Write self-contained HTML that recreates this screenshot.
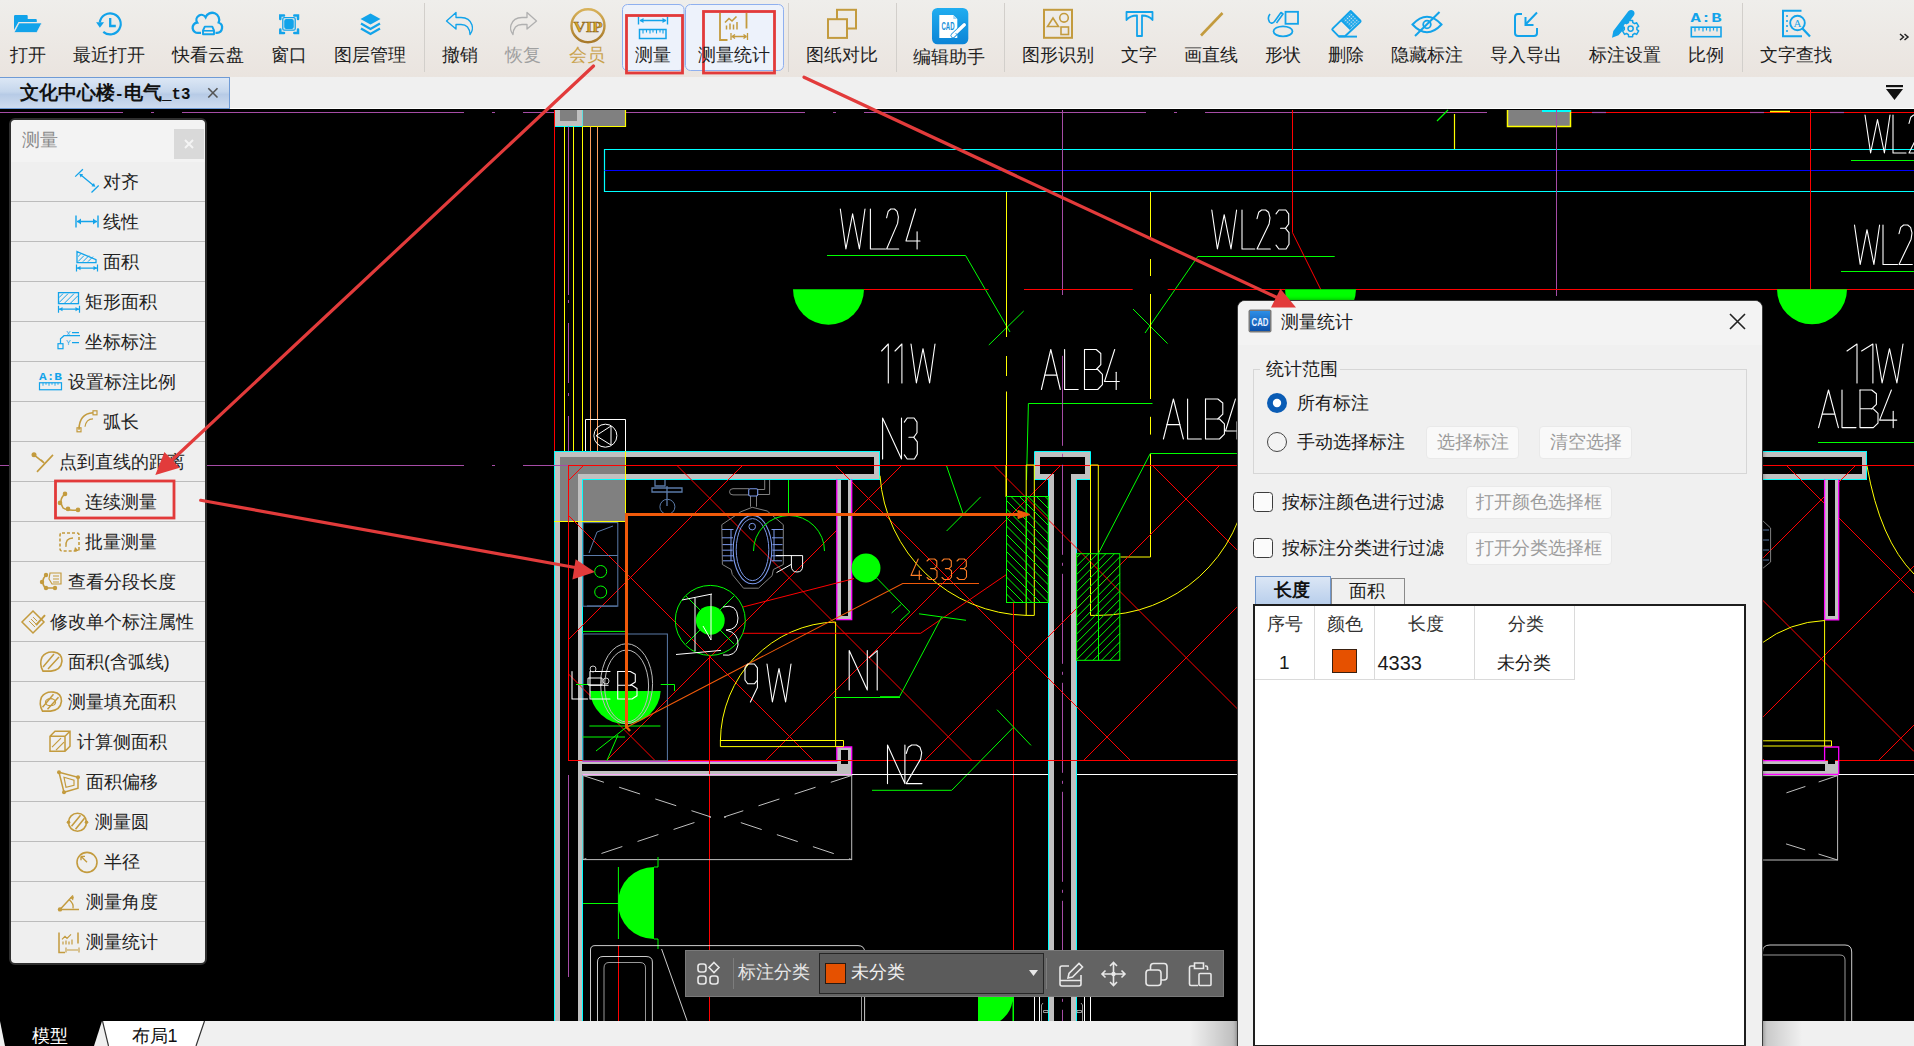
<!DOCTYPE html>
<html><head><meta charset="utf-8">
<style>
*{margin:0;padding:0;box-sizing:border-box}
html,body{width:1914px;height:1046px;overflow:hidden}
body{position:relative;background:#000;font-family:"Liberation Sans",sans-serif;color:#222}
.a{position:absolute}
.lb{position:absolute;font-size:17.5px;line-height:22px;white-space:nowrap;transform:translateX(-50%)}
.t{position:absolute;font-size:17.8px;line-height:22px;white-space:nowrap;color:#1a1a1a}
.btn{position:absolute;background:#f9f9f9;border:1px solid #e9e9e9;border-radius:4px;color:#9c9c9c;font-size:17.5px;line-height:31px;text-align:center;white-space:nowrap}
</style></head><body>

<svg class="a" style="left:0;top:0" width="1914" height="1046" viewBox="0 0 1914 1046"><defs><clipPath id="cadclip"><rect x="0" y="109" width="1914" height="912"/></clipPath><clipPath id="latclip"><rect x="568.3" y="465.1" width="1346" height="295.7"/></clipPath></defs><rect x="0" y="109" width="1914" height="912" fill="#000"/><g clip-path="url(#cadclip)" shape-rendering="auto"><line x1="0" y1="112.5" x2="123" y2="112.5" stroke="#a64ca6" stroke-width="1" /><line x1="151" y1="112.5" x2="154" y2="112.5" stroke="#a64ca6" stroke-width="1" /><line x1="182" y1="112.5" x2="464" y2="112.5" stroke="#a64ca6" stroke-width="1" /><line x1="492" y1="112.5" x2="495" y2="112.5" stroke="#a64ca6" stroke-width="1" /><line x1="523" y1="112.5" x2="805" y2="112.5" stroke="#a64ca6" stroke-width="1" /><line x1="833" y1="112.5" x2="836" y2="112.5" stroke="#a64ca6" stroke-width="1" /><line x1="864" y1="112.5" x2="1146" y2="112.5" stroke="#a64ca6" stroke-width="1" /><line x1="1174" y1="112.5" x2="1177" y2="112.5" stroke="#a64ca6" stroke-width="1" /><line x1="1205" y1="112.5" x2="1487" y2="112.5" stroke="#a64ca6" stroke-width="1" /><line x1="1571" y1="112.5" x2="1914" y2="112.5" stroke="#ff0000" stroke-width="1" /><line x1="1592" y1="112.5" x2="1606" y2="112.5" stroke="#a64ca6" stroke-width="1.2" /><line x1="1750" y1="112.5" x2="1764" y2="112.5" stroke="#a64ca6" stroke-width="1.2" /><line x1="1830" y1="112.5" x2="1844" y2="112.5" stroke="#a64ca6" stroke-width="1.2" /><line x1="1770" y1="111.5" x2="1790" y2="111.5" stroke="#ffff00" stroke-width="1.5" /><rect x="554" y="110" width="29" height="16" fill="#c0c0c0"/><rect x="560" y="110" width="17" height="11" fill="#808080"/><path d="M554.5 110 V126.5 H583 V110" stroke="#00ffff" stroke-width="1" fill="none" /><rect x="583" y="110" width="43" height="16" fill="#808080"/><path d="M583 126.5 H625.5 V110" stroke="#ffff00" stroke-width="1.2" fill="none" /><rect x="1507" y="110" width="64" height="17" fill="#808080"/><path d="M1507.5 110 V126.5 H1570.5 V110" stroke="#ffff00" stroke-width="1.5" fill="none" /><line x1="1542" y1="111" x2="1571" y2="111" stroke="#00ffff" stroke-width="2" /><line x1="554.5" y1="110" x2="554.5" y2="1021" stroke="#ff0000" stroke-width="1" /><line x1="564.5" y1="126.5" x2="564.5" y2="451" stroke="#ffff00" stroke-width="1" /><line x1="573.5" y1="126.5" x2="573.5" y2="451" stroke="#ffff00" stroke-width="1" /><line x1="582.5" y1="126.5" x2="582.5" y2="451" stroke="#ffff00" stroke-width="1" /><line x1="568.5" y1="126.5" x2="568.5" y2="295" stroke="#a64ca6" stroke-width="1" /><line x1="568.5" y1="300" x2="568.5" y2="451" stroke="#a64ca6" stroke-width="1" stroke-dasharray="3 20 60 10"/><line x1="590.5" y1="126.5" x2="590.5" y2="451" stroke="#ff9f5f" stroke-width="1" /><line x1="597.5" y1="126.5" x2="597.5" y2="451" stroke="#ff9f5f" stroke-width="1" /><path d="M1914 149.5 H604.5 V191.5 H1914" stroke="#00ffff" stroke-width="1.2" fill="none" /><line x1="604.5" y1="170.5" x2="1914" y2="170.5" stroke="#0000ff" stroke-width="1" /><g fill="none" stroke="#fff" stroke-width="1.1" stroke-linejoin="round" stroke-linecap="round"><polyline points="840.3,209.0 845.9,249.0 852.6,213.8 859.4,249.0 865.0,209.0"/><polyline points="870.4,209.0 870.4,249.0 885.5,249.0"/><polyline points="886.6,217.8 888.2,211.4 890.8,209.0 894.5,209.0 897.1,211.4 898.4,217.0 897.6,223.4 886.6,249.0 898.7,249.0"/><polyline points="915.6,209.0 906.0,241.0 920.0,241.0"/><polyline points="917.1,231.8 917.1,249.0"/></g><g fill="none" stroke="#fff" stroke-width="1.1" stroke-linejoin="round" stroke-linecap="round"><polyline points="1211.8,210.0 1217.4,249.0 1224.2,214.7 1231.0,249.0 1236.6,210.0"/><polyline points="1242.0,210.0 1242.0,249.0 1254.8,249.0"/><polyline points="1257.0,218.6 1258.7,212.3 1261.6,210.0 1265.7,210.0 1268.6,212.3 1270.0,217.8 1269.1,224.0 1257.0,249.0 1270.3,249.0"/><polyline points="1276.0,213.9 1278.9,210.0 1285.8,210.0 1288.7,213.9 1288.7,224.0 1285.5,228.3 1280.6,228.3"/><polyline points="1285.5,228.3 1289.0,232.6 1289.0,244.3 1286.1,249.0 1278.9,249.0 1276.0,245.1"/></g><g fill="none" stroke="#fff" stroke-width="1.1" stroke-linejoin="round" stroke-linecap="round"><polyline points="1865.0,115.0 1870.6,153.0 1877.5,119.6 1884.4,153.0 1890.0,115.0"/><polyline points="1893.0,115.0 1893.0,153.0 1906.0,153.0"/><polyline points="1909.0,123.4 1910.7,117.3 1913.6,115.0 1917.7,115.0 1920.6,117.3 1922.0,122.6 1921.1,128.7 1909.0,153.0 1922.3,153.0"/></g><g fill="none" stroke="#fff" stroke-width="1.1" stroke-linejoin="round" stroke-linecap="round"><polyline points="1854.5,225.0 1860.2,264.5 1867.0,229.7 1873.9,264.5 1879.6,225.0"/><polyline points="1883.0,225.0 1883.0,264.5 1897.5,264.5"/><polyline points="1899.0,233.7 1900.7,227.4 1903.6,225.0 1907.7,225.0 1910.6,227.4 1912.0,232.9 1911.1,239.2 1899.0,264.5 1912.3,264.5"/></g><path d="M827 255.5 H965.6 L1010 332" stroke="#00ff00" stroke-width="1" fill="none" /><line x1="1023.7" y1="311" x2="988.8" y2="345" stroke="#00ff00" stroke-width="1" /><path d="M1334.7 256.5 H1197.8 L1145 333" stroke="#00ff00" stroke-width="1" fill="none" /><line x1="1133" y1="309" x2="1167.6" y2="343.6" stroke="#00ff00" stroke-width="1" /><line x1="1851" y1="160.5" x2="1914" y2="160.5" stroke="#00ff00" stroke-width="1" /><line x1="1841" y1="271.5" x2="1914" y2="271.5" stroke="#00ff00" stroke-width="1" /><line x1="1437" y1="121" x2="1448" y2="110" stroke="#00ff00" stroke-width="1.2" /><line x1="1454.5" y1="114" x2="1454.5" y2="149" stroke="#ffff00" stroke-width="1.2" /><line x1="1062.5" y1="110" x2="1062.5" y2="295" stroke="#a64ca6" stroke-width="1" /><line x1="1556.5" y1="110" x2="1556.5" y2="296" stroke="#a64ca6" stroke-width="1" /><line x1="1810.5" y1="110" x2="1810.5" y2="289.6" stroke="#ff0000" stroke-width="1" /><path d="M1292.5 110 V232.7 L1320.8 289.6" stroke="#ff0000" stroke-width="1" fill="none" /><path d="M1006.5 192 V337 M1006.5 356 V376 M1006.5 391.5 V497" stroke="#ffff00" stroke-width="1" fill="none" /><path d="M1150.5 192 V237 M1150.5 259 V276 M1150.5 294 V399 M1150.5 416.8 V434.6 M1150.5 453.6 V557 H1120.4" stroke="#ffff00" stroke-width="1" fill="none" /><path d="M864 289.5 H988.6 M1024 289.5 H1132.7 M1167.7 289.5 H1285 M1355.6 289.5 H1914" stroke="#ff0000" stroke-width="1" fill="none" /><path d="M793.0 289.3 A35.5 35.5 0 0 0 864.0 289.3 Z" fill="#00ff00"/><path d="M1285.0 289.3 A35.5 35.5 0 0 0 1356.0 289.3 Z" fill="#00ff00"/><path d="M1777 289.3 A35 35 0 0 0 1847 289.3 Z" fill="#00ff00"/><g fill="none" stroke="#fff" stroke-width="1.1" stroke-linejoin="round" stroke-linecap="round"><polyline points="881.6,351.0 888.3,344.0 888.3,383.0"/><polyline points="895.0,351.0 901.9,344.0 901.9,383.0"/><polyline points="911.0,344.0 916.4,383.0 923.0,348.7 929.6,383.0 935.0,344.0"/></g><g fill="none" stroke="#fff" stroke-width="1.1" stroke-linejoin="round" stroke-linecap="round"><polyline points="882.6,459.0 882.6,418.0 901.5,459.0 901.5,418.0"/><polyline points="904.3,422.1 907.2,418.0 914.1,418.0 917.0,422.1 917.0,432.8 913.8,437.3 908.9,437.3"/><polyline points="913.8,437.3 917.3,441.8 917.3,454.1 914.4,459.0 907.2,459.0 904.3,454.9"/></g><g fill="none" stroke="#fff" stroke-width="1.1" stroke-linejoin="round" stroke-linecap="round"><polyline points="1041.4,389.5 1050.8,349.5 1060.3,389.5"/><polyline points="1044.8,375.1 1056.9,375.1"/><polyline points="1064.6,349.5 1064.6,389.5 1078.2,389.5"/><polyline points="1084.5,349.5 1084.5,389.5 1097.7,389.5 1102.4,384.7 1102.4,374.3 1097.7,369.5 1084.5,369.5"/><polyline points="1084.5,349.5 1096.2,349.5 1100.8,353.5 1100.8,364.7 1096.2,369.5"/><polyline points="1114.7,349.5 1104.5,381.5 1119.3,381.5"/><polyline points="1116.2,372.3 1116.2,389.5"/></g><g fill="none" stroke="#fff" stroke-width="1.1" stroke-linejoin="round" stroke-linecap="round"><polyline points="1163.4,439.0 1173.4,399.0 1183.4,439.0"/><polyline points="1167.0,424.6 1179.8,424.6"/><polyline points="1187.6,399.0 1187.6,439.0 1201.3,439.0"/><polyline points="1205.5,399.0 1205.5,439.0 1219.5,439.0 1224.4,434.2 1224.4,423.8 1219.5,419.0 1205.5,419.0"/><polyline points="1205.5,399.0 1217.8,399.0 1222.8,403.0 1222.8,414.2 1217.8,419.0"/><polyline points="1235.5,399.0 1225.5,431.0 1240.0,431.0"/><polyline points="1237.0,421.8 1237.0,439.0"/></g><g fill="none" stroke="#fff" stroke-width="1.1" stroke-linejoin="round" stroke-linecap="round"><polyline points="1847.0,351.0 1857.0,344.0 1857.0,383.0"/><polyline points="1861.6,351.0 1872.9,344.0 1872.9,383.0"/><polyline points="1876.0,344.0 1882.1,383.0 1889.5,348.7 1896.9,383.0 1903.0,344.0"/></g><g fill="none" stroke="#fff" stroke-width="1.1" stroke-linejoin="round" stroke-linecap="round"><polyline points="1818.6,427.6 1828.5,390.0 1838.4,427.6"/><polyline points="1822.2,414.1 1834.8,414.1"/><polyline points="1842.0,390.0 1842.0,427.6 1856.0,427.6"/><polyline points="1860.0,390.0 1860.0,427.6 1873.3,427.6 1878.0,423.1 1878.0,413.3 1873.3,408.8 1860.0,408.8"/><polyline points="1860.0,390.0 1871.7,390.0 1876.4,393.8 1876.4,404.3 1871.7,408.8"/><polyline points="1891.4,390.0 1879.6,420.1 1896.8,420.1"/><polyline points="1893.2,411.4 1893.2,427.6"/></g><line x1="1818" y1="442.5" x2="1914" y2="442.5" stroke="#00ff00" stroke-width="1" /><path d="M1152.5 403.5 H1028.4 L1026.5 480" stroke="#00ff00" stroke-width="1" fill="none" /><path d="M585.5 451 V419.5 H625.5 V451" stroke="#ffffff" stroke-width="1" fill="none" /><circle cx="605.4" cy="435.7" r="11.5" fill="none" stroke="#ffffff"/><path d="M596 435.7 L611 426 V445 Z" stroke="#ffffff" stroke-width="1" fill="none" /><rect x="560" y="457" width="65" height="64" fill="#808080"/><rect x="554" y="451" width="326" height="6" fill="#c0c0c0"/><rect x="578" y="474" width="302" height="6" fill="#c0c0c0"/><rect x="874" y="451" width="6" height="29" fill="#c0c0c0"/><rect x="554" y="451" width="6" height="570" fill="#c0c0c0"/><rect x="578" y="474" width="4" height="547" fill="#c0c0c0"/><path d="M554.5 1021 V451.5 H879.5 V479.5 H582.5 V1021" stroke="#00ffff" stroke-width="1" fill="none" /><path d="M554.2 521.5 H625.5 V451.3" stroke="#ffff00" stroke-width="1" fill="none" /><rect x="1034" y="452" width="57" height="28" fill="#c0c0c0"/><rect x="1040" y="457" width="45" height="17" fill="#000"/><rect x="1048" y="474" width="29" height="547" fill="#c0c0c0"/><rect x="1054" y="480" width="11" height="541" fill="#000"/><rect x="1065" y="474" width="6" height="547" fill="#000"/><rect x="1054" y="474" width="17" height="6" fill="#000"/><path d="M1048.5 1021 V479.5 H1034.5 V451.5 H1090.5 V479.5 H1076.5 V1021" stroke="#00ffff" stroke-width="1" fill="none" /><rect x="1762" y="451" width="105" height="29" fill="#c0c0c0"/><rect x="1762" y="457" width="100" height="17" fill="#000"/><path d="M1762 451.5 H1866.5 V479.5 H1762" stroke="#00ffff" stroke-width="1" fill="none" /><line x1="0" y1="465.5" x2="123" y2="465.5" stroke="#a64ca6" stroke-width="1" /><line x1="151" y1="465.5" x2="154" y2="465.5" stroke="#a64ca6" stroke-width="1" /><line x1="182" y1="465.5" x2="464" y2="465.5" stroke="#a64ca6" stroke-width="1" /><line x1="492" y1="465.5" x2="495" y2="465.5" stroke="#a64ca6" stroke-width="1" /><line x1="523" y1="465.5" x2="568" y2="465.5" stroke="#a64ca6" stroke-width="1" /><line x1="568.3" y1="465.5" x2="1914" y2="465.5" stroke="#ff0000" stroke-width="1" /><line x1="568.5" y1="465" x2="568.5" y2="761" stroke="#ff0000" stroke-width="1" /><line x1="568.5" y1="775" x2="568.5" y2="977" stroke="#a64ca6" stroke-width="1" /><line x1="1062.5" y1="355.8" x2="1062.5" y2="1021" stroke="#a64ca6" stroke-width="1" stroke-dasharray="90 8 3 8"/><g clip-path="url(#latclip)"><line x1="1786.1" y1="465.1" x2="1914" y2="593.0" stroke="#ff0000" stroke-width="1" /><line x1="1627.6" y1="465.1" x2="1914" y2="751.5" stroke="#ff0000" stroke-width="1" /><line x1="1469.1" y1="465.1" x2="1764.8" y2="760.8" stroke="#ff0000" stroke-width="1" /><line x1="1310.6" y1="465.1" x2="1606.3" y2="760.8" stroke="#ff0000" stroke-width="1" /><line x1="1152.1" y1="465.1" x2="1447.8" y2="760.8" stroke="#ff0000" stroke-width="1" /><line x1="993.6" y1="465.1" x2="1289.3" y2="760.8" stroke="#ff0000" stroke-width="1" /><line x1="835.1" y1="465.1" x2="1130.8" y2="760.8" stroke="#ff0000" stroke-width="1" /><line x1="676.6" y1="465.1" x2="972.3" y2="760.8" stroke="#ff0000" stroke-width="1" /><line x1="568.3" y1="515.3" x2="813.8" y2="760.8" stroke="#ff0000" stroke-width="1" /><line x1="568.3" y1="673.8" x2="655.3" y2="760.8" stroke="#ff0000" stroke-width="1" /><line x1="568.3" y1="480.7" x2="583.9" y2="465.1" stroke="#ff0000" stroke-width="1" /><line x1="568.3" y1="639.7" x2="742.9" y2="465.1" stroke="#ff0000" stroke-width="1" /><line x1="606.2" y1="760.8" x2="901.9" y2="465.1" stroke="#ff0000" stroke-width="1" /><line x1="765.2" y1="760.8" x2="1060.9" y2="465.1" stroke="#ff0000" stroke-width="1" /><line x1="924.2" y1="760.8" x2="1219.9" y2="465.1" stroke="#ff0000" stroke-width="1" /><line x1="1083.2" y1="760.8" x2="1378.9" y2="465.1" stroke="#ff0000" stroke-width="1" /><line x1="1242.2" y1="760.8" x2="1537.9" y2="465.1" stroke="#ff0000" stroke-width="1" /><line x1="1401.2" y1="760.8" x2="1696.9" y2="465.1" stroke="#ff0000" stroke-width="1" /><line x1="1560.2" y1="760.8" x2="1855.9" y2="465.1" stroke="#ff0000" stroke-width="1" /><line x1="1719.2" y1="760.8" x2="1914" y2="566" stroke="#ff0000" stroke-width="1" /><line x1="1878.2" y1="760.8" x2="1914" y2="725" stroke="#ff0000" stroke-width="1" /></g><rect x="837" y="480" width="15" height="140" fill="#c0c0c0"/><rect x="841" y="480" width="7" height="136" fill="#000"/><path d="M836.8 479.6 V619.7 H851.7 V479.6" stroke="#ff00ff" stroke-width="1.3" fill="none" /><rect x="582" y="761" width="270" height="14" fill="#c0c0c0"/><rect x="582" y="764" width="255" height="7" fill="#000"/><rect x="837" y="747" width="15" height="28" fill="#c0c0c0"/><rect x="841" y="750" width="7" height="14" fill="#000"/><path d="M582.5 761 H836.8 V747 H851.7 V775 H582.5" stroke="#ff00ff" stroke-width="1.3" fill="none" /><line x1="1762" y1="760.5" x2="1914" y2="760.5" stroke="#ff0000" stroke-width="1" /><line x1="568.3" y1="760.5" x2="1914" y2="760.5" stroke="#ff0000" stroke-width="1" /><rect x="1825" y="480" width="14" height="140" fill="#c0c0c0"/><rect x="1828" y="480" width="7" height="136" fill="#000"/><path d="M1824.6 479.5 V619.8 H1838.7 V479.5" stroke="#ff00ff" stroke-width="1.3" fill="none" /><rect x="1762" y="761" width="77" height="13" fill="#c0c0c0"/><rect x="1762" y="764" width="63" height="7" fill="#000"/><rect x="1828" y="750" width="7" height="14" fill="#000"/><path d="M1762 760.7 H1824.6 V747 H1838.7 V774.5 H1762" stroke="#ff00ff" stroke-width="1.3" fill="none" /><line x1="1838.7" y1="774.5" x2="1914" y2="774.5" stroke="#ffffff" stroke-width="1" /><path d="M1824.6 619.8 V746 M1762 740.8 H1831.5 V746 H1762" stroke="#ffff00" stroke-width="1" fill="none" /><path d="M1762 643 Q1790 622 1824.6 620.5" stroke="#ffff00" stroke-width="1" fill="none" /><path d="M1867 466 Q1880 540 1914 574" stroke="#ffff00" stroke-width="1" fill="none" /><path d="M720.4 741 A118 120 0 0 1 835.6 622" stroke="#ffff00" stroke-width="1" fill="none" /><path d="M720.4 740.5 H843.5 V746.6 H720.4 Z M835.6 622 V746.6" stroke="#ffff00" stroke-width="1" fill="none" /><path d="M880 475.7 A150 150 0 0 0 1026.2 615.4" stroke="#ffff00" stroke-width="1" fill="none" /><path d="M1248 480 A150 150 0 0 1 1098.3 615.4" stroke="#ffff00" stroke-width="1" fill="none" /><path d="M1006 465 V497 M1026.2 465 V615.4 H1034.3 V465 M1090.5 465 V615.4 H1098.3 V465 M1034.3 465 H1026.2 M1090.5 465 H1098.3" stroke="#ffff00" stroke-width="1" fill="none" /><rect x="1006.5" y="496.5" width="41.8" height="106" fill="none" stroke="#00ff00"/><line x1="1006.5" y1="594.0" x2="1015.0" y2="602.5" stroke="#00ff00" stroke-width="1" /><line x1="1006.5" y1="585.5" x2="1023.5" y2="602.5" stroke="#00ff00" stroke-width="1" /><line x1="1006.5" y1="577.0" x2="1032.0" y2="602.5" stroke="#00ff00" stroke-width="1" /><line x1="1006.5" y1="568.5" x2="1040.5" y2="602.5" stroke="#00ff00" stroke-width="1" /><line x1="1006.5" y1="560.0" x2="1048.3" y2="601.8" stroke="#00ff00" stroke-width="1" /><line x1="1006.5" y1="551.5" x2="1048.3" y2="593.3" stroke="#00ff00" stroke-width="1" /><line x1="1006.5" y1="543.0" x2="1048.3" y2="584.8" stroke="#00ff00" stroke-width="1" /><line x1="1006.5" y1="534.5" x2="1048.3" y2="576.3" stroke="#00ff00" stroke-width="1" /><line x1="1006.5" y1="526.0" x2="1048.3" y2="567.8" stroke="#00ff00" stroke-width="1" /><line x1="1006.5" y1="517.5" x2="1048.3" y2="559.3" stroke="#00ff00" stroke-width="1" /><line x1="1006.5" y1="509.0" x2="1048.3" y2="550.8" stroke="#00ff00" stroke-width="1" /><line x1="1006.5" y1="500.5" x2="1048.3" y2="542.3" stroke="#00ff00" stroke-width="1" /><line x1="1011.0" y1="496.5" x2="1048.3" y2="533.8" stroke="#00ff00" stroke-width="1" /><line x1="1019.5" y1="496.5" x2="1048.3" y2="525.3" stroke="#00ff00" stroke-width="1" /><line x1="1028.0" y1="496.5" x2="1048.3" y2="516.8" stroke="#00ff00" stroke-width="1" /><line x1="1036.5" y1="496.5" x2="1048.3" y2="508.3" stroke="#00ff00" stroke-width="1" /><line x1="1045.0" y1="496.5" x2="1048.3" y2="499.8" stroke="#00ff00" stroke-width="1" /><line x1="1026.5" y1="496.5" x2="1026.5" y2="602.5" stroke="#00ff00" stroke-width="1" /><rect x="1076.6" y="553.7" width="43.2" height="106.6" fill="none" stroke="#00ff00"/><line x1="1076.6" y1="557.6" x2="1080.5" y2="553.7" stroke="#00ff00" stroke-width="1" /><line x1="1076.6" y1="566.1" x2="1089.0" y2="553.7" stroke="#00ff00" stroke-width="1" /><line x1="1076.6" y1="574.6" x2="1097.5" y2="553.7" stroke="#00ff00" stroke-width="1" /><line x1="1076.6" y1="583.1" x2="1106.0" y2="553.7" stroke="#00ff00" stroke-width="1" /><line x1="1076.6" y1="591.6" x2="1114.5" y2="553.7" stroke="#00ff00" stroke-width="1" /><line x1="1076.6" y1="600.1" x2="1119.8" y2="556.9" stroke="#00ff00" stroke-width="1" /><line x1="1076.6" y1="608.6" x2="1119.8" y2="565.4" stroke="#00ff00" stroke-width="1" /><line x1="1076.6" y1="617.1" x2="1119.8" y2="573.9" stroke="#00ff00" stroke-width="1" /><line x1="1076.6" y1="625.6" x2="1119.8" y2="582.4" stroke="#00ff00" stroke-width="1" /><line x1="1076.6" y1="634.1" x2="1119.8" y2="590.9" stroke="#00ff00" stroke-width="1" /><line x1="1076.6" y1="642.6" x2="1119.8" y2="599.4" stroke="#00ff00" stroke-width="1" /><line x1="1076.6" y1="651.1" x2="1119.8" y2="607.9" stroke="#00ff00" stroke-width="1" /><line x1="1076.6" y1="659.6" x2="1119.8" y2="616.4" stroke="#00ff00" stroke-width="1" /><line x1="1084.4" y1="660.3" x2="1119.8" y2="624.9" stroke="#00ff00" stroke-width="1" /><line x1="1092.9" y1="660.3" x2="1119.8" y2="633.4" stroke="#00ff00" stroke-width="1" /><line x1="1101.4" y1="660.3" x2="1119.8" y2="641.9" stroke="#00ff00" stroke-width="1" /><line x1="1109.9" y1="660.3" x2="1119.8" y2="650.4" stroke="#00ff00" stroke-width="1" /><line x1="1118.4" y1="660.3" x2="1119.8" y2="658.9" stroke="#00ff00" stroke-width="1" /><line x1="1098.5" y1="553.7" x2="1098.5" y2="660.3" stroke="#00ff00" stroke-width="1" /><path d="M1098.3 553.7 L1150.3 453.5 H1237" stroke="#00ff00" stroke-width="1" fill="none" /><rect x="583" y="522.6" width="34.8" height="83.6" fill="none" stroke="#5a7aa8"/><line x1="583" y1="555.5" x2="617.8" y2="555.5" stroke="#5a7aa8" stroke-width="1" /><path d="M589 553 L597 532 L613 526 M587 606 H617" stroke="#5a7aa8" stroke-width="1" fill="none" /><circle cx="600.7" cy="571.5" r="6" fill="none" stroke="#00ff00"/><circle cx="600.7" cy="592" r="6" fill="none" stroke="#00ff00"/><rect x="583" y="634" width="84.4" height="126.8" fill="none" stroke="#5a7aa8"/><path d="M655 480 V486 H665 V480 M667 486 V506 M652 488 H682 V492 H652 Z" stroke="#5a7aa8" stroke-width="1.3" fill="none" /><circle cx="667.4" cy="506.8" r="7.5" fill="none" stroke="#5a7aa8"/><path d="M741 511.7 L752.2 507.3 L767.2 511 L783.3 524.7 V564.5 L773.4 569.5 L772.1 575.7 L758.5 588.2 H743.5 L732.3 574.5 L731.1 569.5 L722.4 564.5 L721.8 524.7 Z" stroke="#808080" stroke-width="1" fill="none" /><ellipse cx="752.5" cy="549.6" rx="19.3" ry="34.2" fill="none" stroke="#7a98e8" stroke-width="1.1"/><ellipse cx="752.5" cy="549.6" rx="16.3" ry="31" fill="none" stroke="#7a98e8" stroke-width="1"/><circle cx="752.2" cy="526.6" r="3.3" fill="none" stroke="#7a98e8"/><path d="M722 529.5 H733.5 M722 537.8 H733 M722.5 544.6 H732.5 M722.5 550.2 H732.5 M722.5 555.8 H733 M723 560.8 H733.5 M771.5 529.5 H783 M772 537.8 H783 M772.5 544.6 H782.5 M772.5 550.2 H782.5 M772 555.8 H782.5 M771.5 560.8 H782" stroke="#7a98e8" stroke-width="1" fill="none" /><path d="M731 529.5 V561 M774 529.5 V561" stroke="#7a98e8" stroke-width="1" fill="none" /><path d="M749 488.7 H733 Q729.5 488.7 729.5 491.8 Q729.5 494.9 733 494.9 H749 M750.5 496 V506.7 M756.5 496 V506.7 M764.7 480 V489.5 H758 M769.6 480 V494.5 H758" stroke="#808080" stroke-width="1" fill="none" /><rect x="748.7" y="488.7" width="9" height="7.3" rx="1.5" fill="none" stroke="#7a98e8" stroke-width="1.1"/><path d="M753.5 551 A35.5 35.5 0 0 1 824.5 551" stroke="#00ff00" stroke-width="1" fill="none" /><line x1="788.5" y1="480" x2="788.5" y2="513" stroke="#00ff00" stroke-width="1" /><path d="M775.9 555.6 H802.6 V566 Q802.6 572 797 572 Q791.4 572 791.4 566 V555.6 M776.5 572.6 L791 564.5" stroke="#ffffff" stroke-width="1" fill="none" /><circle cx="710.3" cy="620.4" r="35" fill="none" stroke="#00ff00"/><circle cx="710.3" cy="620.4" r="14.4" fill="#00ff00"/><path d="M686 596 L734 644 M734 596 L686 644" stroke="#00ff00" stroke-width="1" fill="none" /><circle cx="866" cy="568" r="14.5" fill="#00ff00"/><line x1="743" y1="607" x2="854" y2="578.6" stroke="#ff0000" stroke-width="1" /><path d="M682 600 L712 594 M695 598 V651 M711 594 V640 L703 626 M676 654.5 L721 650.4" stroke="#ffffff" stroke-width="1" fill="none" /><path d="M723 607 Q737 603 738 618 Q738 630 726 630 Q739 633 738 645 Q736 657 723 655" stroke="#ffffff" stroke-width="1" fill="none" /><path d="M590 691 A35.4 35 0 0 0 660.7 691 Z" fill="#00ff00"/><ellipse cx="626.6" cy="683.7" rx="26" ry="40" fill="none" stroke="#bbb"/><ellipse cx="626.6" cy="686" rx="22" ry="36" fill="none" stroke="#bbb"/><path d="M582.5 631.4 H625 M589.4 726 H660.4 M582.5 737 H625 M576 684.5 H590 M660.7 684.5 H674.5 V691" stroke="#00ff00" stroke-width="1" fill="none" /><path d="M596 751 L625.7 727.7 M606.8 760.8 L618 735" stroke="#00ff00" stroke-width="1" fill="none" /><g fill="none" stroke="#fff" stroke-width="1.1" stroke-linejoin="round" stroke-linecap="round"><polyline points="572.0,671.5 572.0,699.0 587.6,699.0"/><polyline points="610.0,671.5 590.0,671.5 590.0,699.0 610.0,699.0"/><polyline points="590.0,685.2 608.1,685.2"/><polyline points="617.7,671.5 617.7,699.0 632.0,699.0 637.0,695.7 637.0,688.5 632.0,685.2 617.7,685.2"/><polyline points="617.7,671.5 630.3,671.5 635.3,674.2 635.3,682.0 630.3,685.2"/></g><circle cx="593" cy="669" r="3" fill="none" stroke="#ccc"/><circle cx="606" cy="681" r="3" fill="none" stroke="#ccc"/><path d="M588 678 H602 V685 H588 Z" stroke="#ffffff" stroke-width="1" fill="none" /><line x1="709.5" y1="655" x2="709.5" y2="1021" stroke="#ff0000" stroke-width="1" /><path d="M742.5 633.3 H920.6 L1006 574.8" stroke="#ff0000" stroke-width="1" fill="none" /><line x1="1013.5" y1="602.4" x2="1013.5" y2="1021" stroke="#ff0000" stroke-width="1" /><path d="M625.7 727.7 L902.7 583.5 H979" stroke="#f05a0a" stroke-width="1.1" fill="none" /><line x1="834" y1="697.5" x2="900" y2="697.5" stroke="#00ff00" stroke-width="1" /><path d="M880 696.7 H899.5 L941.7 617 M919 613.8 L966 620.3" stroke="#00ff00" stroke-width="1" fill="none" /><path d="M876.3 577.6 L909.8 612 M891.6 613 L901.2 604.4 M900.3 620.7 L909.8 612" stroke="#00ff00" stroke-width="1" fill="none" /><path d="M946.6 466 L962.8 513 M980.7 496.9 L946.6 531" stroke="#00ff00" stroke-width="1" fill="none" /><path d="M997 709.7 L1031 745.4 M1013.2 727.5 L951.7 790.3 H872" stroke="#00ff00" stroke-width="1" fill="none" /><line x1="851.7" y1="774.5" x2="1048" y2="774.5" stroke="#ffffff" stroke-width="1" /><line x1="1077" y1="774.5" x2="1237" y2="774.5" stroke="#ffffff" stroke-width="1" /><line x1="582.5" y1="774.5" x2="851.7" y2="774.5" stroke="#ffffff" stroke-width="0.6" /><g fill="none" stroke="#fff" stroke-width="1.1" stroke-linejoin="round" stroke-linecap="round"><polyline points="757.4,680.0 754.4,683.8 747.7,683.8 745.0,680.0 745.0,667.8 747.7,664.0 754.4,664.0 757.4,667.8 757.4,687.6 750.4,702.0"/><polyline points="767.0,664.0 772.4,702.0 779.0,668.6 785.6,702.0 791.0,664.0"/></g><g fill="none" stroke="#fff" stroke-width="1.1" stroke-linejoin="round" stroke-linecap="round"><polyline points="849.2,690.0 849.2,650.6 867.3,690.0 867.3,650.6"/><polyline points="869.3,657.7 877.2,650.6 877.2,690.0"/></g><g fill="none" stroke="#fff" stroke-width="1.1" stroke-linejoin="round" stroke-linecap="round"><polyline points="887.5,783.6 887.5,745.0 904.9,783.6 904.9,745.0"/><polyline points="906.2,753.5 908.3,747.3 911.7,745.0 916.5,745.0 920.0,747.3 921.7,752.7 920.7,758.9 906.2,783.6 922.0,783.6"/></g><g fill="none" stroke="#ff7f27" stroke-width="1.1" stroke-linejoin="round" stroke-linecap="round"><polyline points="918.2,559.0 911.0,575.4 921.5,575.4"/><polyline points="919.3,570.7 919.3,579.5"/><polyline points="927.0,561.0 929.2,559.0 934.6,559.0 936.8,561.0 936.8,566.4 934.3,568.6 930.6,568.6"/><polyline points="934.3,568.6 937.0,570.9 937.0,577.0 934.8,579.5 929.2,579.5 927.0,577.5"/><polyline points="942.0,561.0 944.1,559.0 949.2,559.0 951.3,561.0 951.3,566.4 949.0,568.6 945.4,568.6"/><polyline points="949.0,568.6 951.5,570.9 951.5,577.0 949.4,579.5 944.1,579.5 942.0,577.5"/><polyline points="957.0,561.0 959.1,559.0 964.2,559.0 966.3,561.0 966.3,566.4 964.0,568.6 960.4,568.6"/><polyline points="964.0,568.6 966.5,570.9 966.5,577.0 964.4,579.5 959.1,579.5 957.0,577.5"/></g><path d="M626.5 728.4 V514.5 H1027" stroke="#f05a0a" stroke-width="3" fill="none" /><path d="M1030 514.5 L1018 510.5 V518.5 Z" stroke="#f05a0a" stroke-width="1" fill="#f05a0a" /><line x1="626.5" y1="727" x2="630" y2="731" stroke="#f05a0a" stroke-width="2.5" /><rect x="583" y="775.5" width="268.7" height="84.1" fill="none" stroke="#bdbdbd"/><path d="M583 775.5 L711 817 L583 859.6 M851.7 775.5 L724 817 L851.7 859.6" stroke="#c0c0c0" stroke-width="1" fill="none" stroke-dasharray="22 16"/><path d="M654 867 A36 36 0 0 0 654 939 Z" fill="#00ff00"/><path d="M583 903.5 H618.4 M618.4 867 V939 M654 867 H658 V857 M654 939 H658 V949" stroke="#00ff00" stroke-width="1" fill="none" /><line x1="618.5" y1="945" x2="618.5" y2="1021" stroke="#ff0000" stroke-width="1" /><path d="M590.5 1021 V950 Q590.5 945.6 595 945.6 H858 Q864.6 945.6 864.6 952 V1021" stroke="#ffffff" stroke-width="0.8" fill="none" /><path d="M597.5 1021 V962 Q597.5 956.5 603 956.5 H646 Q652.4 956.5 652.4 962 V1021" stroke="#ffffff" stroke-width="0.8" fill="none" /><path d="M604 1021 V968 Q604 962.5 609 962.5 H640 Q645.5 962.5 645.5 968 V1021" stroke="#ffffff" stroke-width="0.6" fill="none" /><line x1="661.6" y1="949" x2="687" y2="1020.6" stroke="#ffffff" stroke-width="0.8" /><line x1="861.5" y1="990" x2="861.5" y2="1021" stroke="#ffffff" stroke-width="0.6" /><path d="M978 997 H1014 V1021 H1012.5 V1001 Q1011 1013 1000 1021 H978 Z" fill="#00ff00"/><path d="M1034.5 997 V1021 M1039.5 997 V1021 M1084.5 997 V1021 M1090.5 997 V1021" stroke="#ffffff" stroke-width="1" fill="none" /><path d="M1041.5 1021 V1005 L1043 1003 M1082.5 1021 V1005 L1081 1003 M1043.5 1010.5 H1048 V1012.5 H1043.5 Z M1077 1010.5 H1081.5 V1012.5 H1077 Z" stroke="#c0c0c0" stroke-width="0.8" fill="none" /><path d="M1762.5 1021 V952 Q1762.5 945 1770 945 H1845 Q1851.7 945 1851.7 952 V1021" stroke="#ffffff" stroke-width="0.8" fill="none" /><path d="M1762.5 955 H1840 Q1845 955 1845 960 V1021" stroke="#ffffff" stroke-width="0.6" fill="none" /><rect x="1762" y="775.6" width="75.6" height="84.4" fill="none" stroke="#bdbdbd"/><path d="M1837.6 775.6 L1780 795 M1837.6 860 L1780 842" stroke="#c0c0c0" stroke-width="1" fill="none" stroke-dasharray="20 14"/><path d="M1762 520 L1770.6 528 V562 L1762 569" stroke="#808080" stroke-width="1" fill="none" /><path d="M1762 530 H1769 M1762 540 H1769 M1762 550 H1769 M1762 560 H1769" stroke="#5a7aa8" stroke-width="1" fill="none" /></g></svg>
<div class="a" style="left:0;top:0;width:1914px;height:77px;background:linear-gradient(#efeeeb,#eae4df)"></div>
<svg class="a" style="left:0;top:0" width="1914" height="77" viewBox="0 0 1914 77"><rect x="622.5" y="4.5" width="61.5" height="66" rx="5" fill="#edf2fb" stroke="#8fb0ef" stroke-width="1"/><rect x="685.5" y="4.5" width="98" height="66" rx="5" fill="#edf2fb" stroke="#8fb0ef" stroke-width="1"/><line x1="424.5" y1="3" x2="424.5" y2="72" stroke="#d2cfcb" stroke-width="1"/><line x1="788.5" y1="3" x2="788.5" y2="72" stroke="#d2cfcb" stroke-width="1"/><line x1="896.5" y1="3" x2="896.5" y2="72" stroke="#d2cfcb" stroke-width="1"/><line x1="1004.5" y1="3" x2="1004.5" y2="72" stroke="#d2cfcb" stroke-width="1"/><line x1="1742.5" y1="3" x2="1742.5" y2="72" stroke="#d2cfcb" stroke-width="1"/><path d="M14 16.3 Q14 15.1 15.2 15.1 H26.7 Q27.7 15.1 27.7 16 V18.9 H35.8 Q36.8 18.9 36.8 19.9 V22 H18.5 L14 30 Z" fill="#12a3ea"/><path d="M19 22.9 H41.9 L36.8 32.6 H14 Z" fill="#12a3ea" stroke="#eee9e4" stroke-width="0.8"/><path d="M99.8 22.4 A10.5 10.5 0 1 1 103.3 31.8" fill="none" stroke="#12a3ea" stroke-width="2.2"/><path d="M96.1 22.3 H104.1 L99.9 27.7 Z" fill="#12a3ea"/><path d="M110.2 17.9 V26 H115.8" fill="none" stroke="#12a3ea" stroke-width="2.3"/><path d="M201 32.9 H198.5 A5.2 5.2 0 0 1 197.2 22.5 A4.5 4.5 0 0 1 205.6 17.2 A7 7 0 0 1 218.7 22.5 A5.4 5.4 0 0 1 217 32.9 H215.5" fill="none" stroke="#12a3ea" stroke-width="2.3"/><path d="M203 34.2 V30.5 L204.8 26.6 H212.3 L214 30.5 V34.2 Z" fill="none" stroke="#12a3ea" stroke-width="1.9" stroke-linejoin="round"/><line x1="203" y1="30.8" x2="214" y2="30.8" stroke="#12a3ea" stroke-width="1.6"/><path d="M280.3 19 V15.5 H284 M294.3 15.5 H298 V19 M298 29.5 V33 H294.3 M284 33 H280.3 V29.5" fill="none" stroke="#12a3ea" stroke-width="2.5" stroke-linecap="round"/><rect x="282.8" y="17.6" width="12.4" height="12.6" rx="1.5" fill="none" stroke="#12a3ea" stroke-width="1.3"/><rect x="284.2" y="19" width="9.6" height="9.9" rx="2" fill="#12a3ea"/><path d="M370.5 13.5 L380.5 19 L370.5 24.5 L360.5 19 Z" fill="#12a3ea"/><path d="M361 23.5 L370.5 29 L380 23.5" fill="none" stroke="#12a3ea" stroke-width="2.3"/><path d="M361 28.5 L370.5 34 L380 28.5" fill="none" stroke="#12a3ea" stroke-width="2.3"/><path d="M456 12.5 L446.5 21 L456 29 V24.5 H461 Q469.5 24.5 470 34.5 Q473.5 30 472 25 Q469.5 17.5 461 17.5 H456 Z" fill="none" stroke="#12a3ea" stroke-width="1.35" stroke-linejoin="round"/><path d="M527 12.5 L536.5 21 L527 29 V24.5 H522 Q513.5 24.5 513 34.5 Q509.5 30 511 25 Q513.5 17.5 522 17.5 H527 Z" fill="none" stroke="#b0b0b0" stroke-width="1.3" stroke-linejoin="round"/><defs><linearGradient id="gd" x1="0" y1="0" x2="0" y2="1"><stop offset="0" stop-color="#d8b25a"/><stop offset="1" stop-color="#a87a2a"/></linearGradient></defs><circle cx="588" cy="25.7" r="16.5" fill="none" stroke="url(#gd)" stroke-width="2.4"/><text x="588" y="31.5" text-anchor="middle" font-family="Liberation Serif" font-weight="bold" font-size="15.5" fill="#d9a928" stroke="#7a5418" stroke-width="0.5" textLength="29" lengthAdjust="spacingAndGlyphs">VIP</text><path d="M638.5 16.5 V24.5 M667.5 16.5 V24.5 M640 20.5 H666" fill="none" stroke="#12a3ea" stroke-width="1.4"/><path d="M639.5 20.5 L643.5 18 V23 Z M666.5 20.5 L662.5 18 V23 Z" fill="#12a3ea"/><rect x="639.5" y="29.5" width="26.5" height="9" fill="none" stroke="#12a3ea" stroke-width="1.5"/><path d="M643 30 V33.5 M646.5 30 V32.5 M650 30 V33.5 M653 30 V32.5 M656.5 30 V33.5 M660 30 V32.5 M663 30 V33.5" stroke="#12a3ea" stroke-width="1.1"/><path d="M720 13 V40 H727.5 M746.5 13 V28.5" fill="none" stroke="#c39b3e" stroke-width="1.8"/><path d="M725 22.5 L729 18.5 L732 21 L736.5 16.5" fill="none" stroke="#c39b3e" stroke-width="1.6"/><path d="M726.5 29.5 V25.5 M730 29.5 V23.5 M733.5 29.5 V24.5 M737 29.5 V22" stroke="#c39b3e" stroke-width="1.5"/><path d="M731 33 V40 M747.5 33 V40 M732 36.5 H746.5 M732 36.5 L735 34.5 M732 36.5 L735 38.5 M746.5 36.5 L743.5 34.5 M746.5 36.5 L743.5 38.5" fill="none" stroke="#c39b3e" stroke-width="1.3"/><rect x="837" y="9.8" width="19" height="18.7" fill="none" stroke="#c39b3e" stroke-width="2"/><rect x="828" y="19.2" width="19" height="18.7" fill="#efebe6" stroke="#c39b3e" stroke-width="2"/><defs><linearGradient id="bl" x1="0" y1="0" x2="0" y2="1"><stop offset="0" stop-color="#20adf0"/><stop offset="1" stop-color="#0b84d6"/></linearGradient></defs><rect x="932" y="8" width="36.3" height="36.3" rx="5.5" fill="url(#bl)"/><path d="M939.3 15 H953.3 L957.3 19 V38 H939.3 Z" fill="#fff"/><path d="M953.3 15.3 L957 19 H953.3 Z" fill="#9fd4f4"/><text x="941.5" y="29.7" font-family="Liberation Sans" font-weight="bold" font-size="10.5" fill="#1a8fd8" textLength="13" lengthAdjust="spacingAndGlyphs">CAD</text><line x1="964.3" y1="24.8" x2="953" y2="35.6" stroke="#1590dc" stroke-width="5" stroke-linecap="round"/><line x1="964.3" y1="24.8" x2="953" y2="35.6" stroke="#fff" stroke-width="3.4" stroke-linecap="round"/><line x1="955.5" y1="33" x2="958" y2="35.5" stroke="#1590dc" stroke-width="0.8"/><rect x="1044" y="9.8" width="28" height="28" fill="none" stroke="#c39b3e" stroke-width="2"/><path d="M1047.5 26.5 L1053 18 L1058.5 26.5 Z" fill="none" stroke="#c39b3e" stroke-width="1.6"/><circle cx="1064" cy="17.8" r="4.3" fill="none" stroke="#c39b3e" stroke-width="1.6"/><rect x="1061" y="27" width="7.5" height="7.5" fill="none" stroke="#c39b3e" stroke-width="1.6"/><path d="M1126.5 12 H1152.5 V20 Q1149 15.5 1142 15.5 V36 H1137 V15.5 Q1130 15.5 1126.5 20 Z" fill="none" stroke="#12a3ea" stroke-width="1.8" stroke-linejoin="round"/><line x1="1201" y1="35.5" x2="1222.5" y2="13" stroke="#c39b3e" stroke-width="2.6"/><rect x="1285.5" y="11.8" width="12.5" height="12" fill="none" stroke="#12a3ea" stroke-width="1.8"/><ellipse cx="1283" cy="31.3" rx="9.5" ry="5" fill="none" stroke="#12a3ea" stroke-width="1.8"/><path d="M1270 14 Q1267 18 1269.5 22 Q1272 24.5 1274.5 21.5 L1281 12.5 L1283 14 L1276.5 23" fill="none" stroke="#12a3ea" stroke-width="1.6" stroke-linejoin="round"/><defs><pattern id="hatchb" width="2.6" height="2.6" patternUnits="userSpaceOnUse" patternTransform="rotate(45)"><rect width="2.6" height="2.6" fill="#12a3ea"/><rect x="0.7" y="0.7" width="1.3" height="1.3" fill="#e8eef2"/></pattern></defs><path d="M1350.7 11 L1360.2 20.5 L1350.5 29.2 L1341.6 20.5 Z" fill="url(#hatchb)"/><path d="M1350.7 11 L1360.2 20.5 Q1361 21.3 1360.2 22 L1345 36.3 H1338.7 L1332.6 30.2 Q1331.8 29.4 1332.6 28.6 Z M1341.6 20.5 L1350.5 29.2" fill="none" stroke="#12a3ea" stroke-width="1.9" stroke-linejoin="round"/><line x1="1338.7" y1="36.6" x2="1357" y2="36.6" stroke="#12a3ea" stroke-width="1.9"/><path d="M1412.5 24.5 Q1427 9 1441.5 24.5 Q1427 40 1412.5 24.5 Z" fill="none" stroke="#12a3ea" stroke-width="2"/><circle cx="1427" cy="24.5" r="3.8" fill="none" stroke="#12a3ea" stroke-width="1.8"/><line x1="1415" y1="36" x2="1439.5" y2="12" stroke="#12a3ea" stroke-width="2"/><path d="M1522 14 H1518 Q1515 14 1515 17 V33 Q1515 36 1518 36 H1534 Q1537 36 1537 33 V28" fill="none" stroke="#12a3ea" stroke-width="2"/><path d="M1537 12.5 L1525.5 24.5 M1525.5 17 V25 H1533.5" fill="none" stroke="#12a3ea" stroke-width="2"/><path d="M1612 37.7 L1613.3 31 L1628.3 11.3 Q1631 8.8 1633.7 11 Q1635.5 13.5 1633.5 16 L1621 32.5 L1618.5 35.3 Z" fill="#12a3ea"/><path d="M1628.57 20.45 L1632.63 20.45 L1632.79 22.59 L1634.71 23.70 L1636.64 22.76 L1638.67 26.28 L1636.90 27.49 L1636.90 29.71 L1638.67 30.92 L1636.64 34.44 L1634.71 33.50 L1632.79 34.61 L1632.63 36.75 L1628.57 36.75 L1628.41 34.61 L1626.49 33.50 L1624.56 34.44 L1622.53 30.92 L1624.30 29.71 L1624.30 27.49 L1622.53 26.28 L1624.56 22.76 L1626.49 23.70 L1628.41 22.59 Z" fill="#ede8e3" stroke="#12a3ea" stroke-width="1.5" stroke-linejoin="round"/><circle cx="1630.6" cy="28.6" r="2.6" fill="none" stroke="#12a3ea" stroke-width="1.5"/><text x="1690.5" y="22.3" font-family="Liberation Mono" font-weight="bold" font-size="13" fill="#12a3ea" textLength="31" lengthAdjust="spacingAndGlyphs">A:B</text><rect x="1691.3" y="27.2" width="29.7" height="9.5" fill="none" stroke="#12a3ea" stroke-width="1.6"/><path d="M1695 27.5 V31.5 M1699 27.5 V30.5 M1703 27.5 V31.5 M1706.5 27.5 V30.5 M1710 27.5 V31.5 M1713.5 27.5 V30.5 M1717 27.5 V31.5" stroke="#12a3ea" stroke-width="1.2"/><path d="M1801.5 10.8 H1783 V36.3 H1802" fill="none" stroke="#12a3ea" stroke-width="2"/><path d="M1786 16 H1788 M1786 21 H1788 M1786 26 H1788 M1786 31 H1788" stroke="#12a3ea" stroke-width="1.3"/><circle cx="1797.5" cy="23" r="7.3" fill="none" stroke="#12a3ea" stroke-width="1.9"/><line x1="1802.5" y1="28.5" x2="1810" y2="36.5" stroke="#12a3ea" stroke-width="2.2"/><text x="1797.5" y="27" text-anchor="middle" font-family="Liberation Serif" font-size="11" fill="#12a3ea">A</text><path d="M1900 34 L1903.5 37 L1900 40 M1904.5 34 L1908 37 L1904.5 40" fill="none" stroke="#222" stroke-width="1.5"/><rect x="626.5" y="15.5" width="56" height="57.5" fill="none" stroke="#e23a3a" stroke-width="2.8"/><rect x="703.5" y="11.5" width="71" height="61.5" fill="none" stroke="#e23a3a" stroke-width="2.8"/></svg>
<div class="lb" style="left:28px;top:44px;color:#1e1e1e">打开</div>
<div class="lb" style="left:109px;top:44px;color:#1e1e1e">最近打开</div>
<div class="lb" style="left:208px;top:44px;color:#1e1e1e">快看云盘</div>
<div class="lb" style="left:288.5px;top:44px;color:#1e1e1e">窗口</div>
<div class="lb" style="left:370px;top:44px;color:#1e1e1e">图层管理</div>
<div class="lb" style="left:459.8px;top:44px;color:#1e1e1e">撤销</div>
<div class="lb" style="left:522.8px;top:44px;color:#a0a0a0">恢复</div>
<div class="lb" style="left:587.3px;top:44px;color:#c9a24c">会员</div>
<div class="lb" style="left:652.5px;top:44px;color:#1e1e1e">测量</div>
<div class="lb" style="left:733.6px;top:44px;color:#1e1e1e">测量统计</div>
<div class="lb" style="left:842px;top:44px;color:#1e1e1e">图纸对比</div>
<div class="lb" style="left:949.3px;top:46px;color:#1e1e1e">编辑助手</div>
<div class="lb" style="left:1058px;top:44px;color:#1e1e1e">图形识别</div>
<div class="lb" style="left:1139px;top:44px;color:#1e1e1e">文字</div>
<div class="lb" style="left:1211px;top:44px;color:#1e1e1e">画直线</div>
<div class="lb" style="left:1283px;top:44px;color:#1e1e1e">形状</div>
<div class="lb" style="left:1345.7px;top:44px;color:#1e1e1e">删除</div>
<div class="lb" style="left:1427px;top:44px;color:#1e1e1e">隐藏标注</div>
<div class="lb" style="left:1526.2px;top:44px;color:#1e1e1e">导入导出</div>
<div class="lb" style="left:1624.8px;top:44px;color:#1e1e1e">标注设置</div>
<div class="lb" style="left:1706px;top:44px;color:#1e1e1e">比例</div>
<div class="lb" style="left:1795.8px;top:44px;color:#1e1e1e">文字查找</div>
<div class="a" style="left:0;top:77px;width:1914px;height:32px;background:#f0f0f0;border-bottom:1px solid #fff"></div>
<div class="a" style="left:0;top:77px;width:230px;height:31.5px;background:linear-gradient(#dce7f5,#c5d6ec 45%,#b7cbe6 55%,#cfdcef);border:1px solid #6f9bd6;border-left:none"></div>
<div class="a" style="left:19.5px;top:82px;font-size:19px;line-height:22px;font-weight:bold;color:#111;white-space:nowrap">文化中心楼<span style="font-family:Liberation Mono;font-size:15.8px;font-weight:bold">-</span>电气<span style="font-family:Liberation Mono;font-size:15.8px;font-weight:bold">_t3</span></div>
<svg class="a" style="left:0;top:77px" width="1914" height="32" viewBox="0 77 1914 32"><path d="M208.3 88.3 L217.5 97.5 M217.5 88.3 L208.3 97.5" stroke="#555" stroke-width="1.6"/><rect x="1886" y="85" width="17" height="2.2" fill="#111"/><path d="M1886 89 H1903 L1894.5 100 Z" fill="#111"/></svg>
<div class="a" style="left:9px;top:118px;width:198px;height:847px;background:#efefef;border:2px solid #2f2f2f;border-radius:6px"></div>
<div class="a" style="left:11px;top:120px;width:194px;height:42px;background:#f3f3f3;border-radius:5px 5px 0 0"></div>
<div class="a" style="left:21.5px;top:129px;font-size:18px;line-height:22px;color:#8a8a8a">测量</div>
<div class="a" style="left:174px;top:128.7px;width:30px;height:30px;background:#d9d9d9"></div>
<svg class="a" style="left:174px;top:128.7px" width="30" height="30"><path d="M11 11 L19 19 M19 11 L11 19" stroke="#f4f4f4" stroke-width="2"/></svg>
<div class="a" style="left:103px;top:170.5px;font-size:17.5px;line-height:22px;white-space:nowrap;color:#222">对齐</div>
<div class="a" style="left:11px;top:201px;width:194px;height:1px;background:#bcbcbc"></div>
<div class="a" style="left:103px;top:210.6px;font-size:17.5px;line-height:22px;white-space:nowrap;color:#222">线性</div>
<div class="a" style="left:11px;top:241px;width:194px;height:1px;background:#bcbcbc"></div>
<div class="a" style="left:103px;top:250.6px;font-size:17.5px;line-height:22px;white-space:nowrap;color:#222">面积</div>
<div class="a" style="left:11px;top:281px;width:194px;height:1px;background:#bcbcbc"></div>
<div class="a" style="left:85px;top:290.6px;font-size:17.5px;line-height:22px;white-space:nowrap;color:#222">矩形面积</div>
<div class="a" style="left:11px;top:321px;width:194px;height:1px;background:#bcbcbc"></div>
<div class="a" style="left:85px;top:330.7px;font-size:17.5px;line-height:22px;white-space:nowrap;color:#222">坐标标注</div>
<div class="a" style="left:11px;top:361px;width:194px;height:1px;background:#bcbcbc"></div>
<div class="a" style="left:68px;top:370.8px;font-size:17.5px;line-height:22px;white-space:nowrap;color:#222">设置标注比例</div>
<div class="a" style="left:11px;top:401px;width:194px;height:1px;background:#bcbcbc"></div>
<div class="a" style="left:103px;top:410.8px;font-size:17.5px;line-height:22px;white-space:nowrap;color:#222">弧长</div>
<div class="a" style="left:11px;top:441px;width:194px;height:1px;background:#bcbcbc"></div>
<div class="a" style="left:59.4px;top:450.8px;font-size:17.5px;line-height:22px;white-space:nowrap;color:#222">点到直线的距离</div>
<div class="a" style="left:11px;top:481px;width:194px;height:1px;background:#bcbcbc"></div>
<div class="a" style="left:85px;top:490.9px;font-size:17.5px;line-height:22px;white-space:nowrap;color:#222">连续测量</div>
<div class="a" style="left:11px;top:521px;width:194px;height:1px;background:#bcbcbc"></div>
<div class="a" style="left:85px;top:531.0px;font-size:17.5px;line-height:22px;white-space:nowrap;color:#222">批量测量</div>
<div class="a" style="left:11px;top:561px;width:194px;height:1px;background:#bcbcbc"></div>
<div class="a" style="left:68px;top:571.0px;font-size:17.5px;line-height:22px;white-space:nowrap;color:#222">查看分段长度</div>
<div class="a" style="left:11px;top:601px;width:194px;height:1px;background:#bcbcbc"></div>
<div class="a" style="left:50px;top:611.0px;font-size:17.5px;line-height:22px;white-space:nowrap;color:#222">修改单个标注属性</div>
<div class="a" style="left:11px;top:641px;width:194px;height:1px;background:#bcbcbc"></div>
<div class="a" style="left:68px;top:651.1px;font-size:17.5px;line-height:22px;white-space:nowrap;color:#222">面积(含弧线)</div>
<div class="a" style="left:11px;top:681px;width:194px;height:1px;background:#bcbcbc"></div>
<div class="a" style="left:67.5px;top:691.1px;font-size:17.5px;line-height:22px;white-space:nowrap;color:#222">测量填充面积</div>
<div class="a" style="left:11px;top:721px;width:194px;height:1px;background:#bcbcbc"></div>
<div class="a" style="left:77px;top:731.2px;font-size:17.5px;line-height:22px;white-space:nowrap;color:#222">计算侧面积</div>
<div class="a" style="left:11px;top:761px;width:194px;height:1px;background:#bcbcbc"></div>
<div class="a" style="left:85.7px;top:771.2px;font-size:17.5px;line-height:22px;white-space:nowrap;color:#222">面积偏移</div>
<div class="a" style="left:11px;top:801px;width:194px;height:1px;background:#bcbcbc"></div>
<div class="a" style="left:94.5px;top:811.3px;font-size:17.5px;line-height:22px;white-space:nowrap;color:#222">测量圆</div>
<div class="a" style="left:11px;top:841px;width:194px;height:1px;background:#bcbcbc"></div>
<div class="a" style="left:104px;top:851.3px;font-size:17.5px;line-height:22px;white-space:nowrap;color:#222">半径</div>
<div class="a" style="left:11px;top:881px;width:194px;height:1px;background:#bcbcbc"></div>
<div class="a" style="left:85.7px;top:891.4px;font-size:17.5px;line-height:22px;white-space:nowrap;color:#222">测量角度</div>
<div class="a" style="left:11px;top:921px;width:194px;height:1px;background:#bcbcbc"></div>
<div class="a" style="left:85.7px;top:931.4px;font-size:17.5px;line-height:22px;white-space:nowrap;color:#222">测量统计</div>
<svg class="a" style="left:0;top:0" width="220" height="1046"><g transform="translate(0 0.0)"><path d="M75.2 176.6 L82.9 169.2 M91.5 192.5 L98.7 185.5 M81.5 175.5 L93 184.9" fill="none" stroke="#12a3ea" stroke-width="1.3"/><path d="M79.2 173.7 L80.65 177.46 L83.15 174.34 Z M95.4 186.8 L91.45 186.16 L93.95 183.04 Z" fill="#12a3ea"/></g><path d="M76 215.55 V227.55 M98 215.55 V227.55 M77 221.55 H97" fill="none" stroke="#12a3ea" stroke-width="1.4"/><path d="M77 221.55 l4 -3 v6 Z M97 221.55 l-4 -3 v6 Z" fill="#12a3ea"/><path d="M77 251.60000000000002 L96 259.6 V262.6 H77 Z" fill="none" stroke="#12a3ea" stroke-width="1.3"/><path d="M78 261.6 l6 -6 M83 261.6 l6 -6 M88 261.6 l5 -5 M78 256.6 l3 -3" stroke="#12a3ea" stroke-width="1"/><path d="M76.5 264.6 V271.6 M97.5 264.6 V271.6 M77 268.1 H97" stroke="#12a3ea" stroke-width="1.2"/><path d="M77 268.1 l3.5 -2.2 v4.4 Z M97 268.1 l-3.5 -2.2 v4.4 Z" fill="#12a3ea"/><rect x="58.5" y="292.65" width="20" height="11" fill="none" stroke="#12a3ea" stroke-width="1.3"/><path d="M59 302.65 l9 -9 M64 303.65 l10 -10 M70 303.65 l8 -8 M59 297.65 l4 -4" stroke="#12a3ea" stroke-width="1"/><path d="M58.5 305.65 V312.65 M79.5 305.65 V312.65 M59 309.15 H79" stroke="#12a3ea" stroke-width="1.2"/><path d="M59 309.15 l3.5 -2.2 v4.4 Z M79 309.15 l-3.5 -2.2 v4.4 Z" fill="#12a3ea"/><rect x="58" y="343.7" width="5" height="5" fill="none" stroke="#12a3ea" stroke-width="1.2"/><path d="M60.5 343.7 V338.7 L64 335.7 H80" fill="none" stroke="#12a3ea" stroke-width="1.2"/><text x="66" y="335.7" font-family="Liberation Sans" font-size="7" fill="#12a3ea">X</text><text x="66" y="344.7" font-family="Liberation Sans" font-size="7" fill="#12a3ea">Y</text><path d="M72 332.7 H79 M72 342.7 H79" stroke="#12a3ea" stroke-width="1.2"/><text x="39" y="379.75" font-family="Liberation Mono" font-weight="bold" font-size="10" fill="#12a3ea" textLength="23" lengthAdjust="spacingAndGlyphs">A:B</text><rect x="39.5" y="382.75" width="22" height="7" fill="none" stroke="#12a3ea" stroke-width="1.2"/><path d="M43 382.75 v3 M46 382.75 v2 M49 382.75 v3 M52 382.75 v2 M55 382.75 v3 M58 382.75 v2" stroke="#12a3ea" stroke-width="0.9"/><path d="M79 429.79999999999995 Q79 413.79999999999995 93 412.79999999999995" fill="none" stroke="#c39b3e" stroke-width="1.6"/><rect x="77" y="427.79999999999995" width="4" height="4" fill="none" stroke="#c39b3e" stroke-width="1.2"/><rect x="93" y="410.79999999999995" width="4" height="4" fill="none" stroke="#c39b3e" stroke-width="1.2"/><path d="M85 426.79999999999995 Q86 418.79999999999995 93 418.79999999999995" fill="none" stroke="#c39b3e" stroke-width="1.2"/><circle cx="34" cy="454.84999999999997" r="2.5" fill="#c39b3e"/><path d="M34 454.84999999999997 L44 462.84999999999997 M37 471.84999999999997 L53 454.84999999999997 M41 459.84999999999997 l3 3" fill="none" stroke="#c39b3e" stroke-width="1.6"/><path d="M65 493.9 Q58 499.9 63 507.9 Q67 510.9 78 509.9" fill="none" stroke="#c39b3e" stroke-width="1.5"/><circle cx="65" cy="493.9" r="2.3" fill="#c39b3e"/><circle cx="60" cy="502.9" r="2.3" fill="#c39b3e"/><circle cx="68" cy="508.9" r="2.3" fill="#c39b3e"/><circle cx="78" cy="509.9" r="2.3" fill="#c39b3e"/><rect x="60" y="532.95" width="19" height="18" rx="2" fill="none" stroke="#c39b3e" stroke-width="1.6" stroke-dasharray="3 2"/><path d="M66 546.95 Q65 537.95 73 537.95" fill="none" stroke="#c39b3e" stroke-width="1.4"/><path d="M75 546.95 l4 4 l-5 0 Z" fill="#c39b3e"/><path d="M46 575.0 Q40 581.0 45 588.0 H55" fill="none" stroke="#c39b3e" stroke-width="1.5"/><circle cx="46" cy="575.0" r="2.2" fill="#c39b3e"/><circle cx="42" cy="582.0" r="2.2" fill="#c39b3e"/><circle cx="46" cy="588.0" r="2.2" fill="#c39b3e"/><circle cx="55" cy="588.0" r="2.2" fill="#c39b3e"/><path d="M50 573.0 H61 V584.0 H52 L49 579.0 Z M53 576.0 H59 M53 579.0 H59 M53 582.0 H59" fill="none" stroke="#c39b3e" stroke-width="1.2"/><path d="M33 611.05 L44 622.05 L33 633.05 L22 622.05 Z" fill="none" stroke="#c39b3e" stroke-width="1.5"/><path d="M29 621.05 l6 6 M31 619.05 l6 6 M33 617.05 l4 4" stroke="#c39b3e" stroke-width="1"/><path d="M36 625.05 L45 615.05" stroke="#c39b3e" stroke-width="2"/><path d="M43 671.0999999999999 Q39 664.0999999999999 42 657.0999999999999 Q46 651.0999999999999 54 652.0999999999999 Q62 653.0999999999999 62 661.0999999999999 Q61 670.0999999999999 51 671.0999999999999 Z" fill="none" stroke="#c39b3e" stroke-width="1.6"/><path d="M43 667.0999999999999 L54 654.0999999999999 M48 669.0999999999999 L59 657.0999999999999" stroke="#c39b3e" stroke-width="1.5"/><path d="M42.5 711.15 Q38.5 704.15 41.5 697.15 Q45.5 691.15 53.5 692.15 Q61.5 693.15 61.5 701.15 Q60.5 710.15 50.5 711.15 Z" fill="none" stroke="#c39b3e" stroke-width="1.6"/><path d="M42.5 707.15 L53.5 694.15 M47.5 709.15 L58.5 697.15" stroke="#c39b3e" stroke-width="1.5"/><ellipse cx="50.5" cy="702.15" rx="5" ry="3.5" fill="none" stroke="#c39b3e" stroke-width="1.3"/><path d="M50 736.1999999999999 L55 731.1999999999999 H70 V746.1999999999999 L65 751.1999999999999 H50 Z M50 736.1999999999999 H65 V751.1999999999999 M65 736.1999999999999 L70 731.1999999999999" fill="none" stroke="#c39b3e" stroke-width="1.5"/><path d="M52 747.1999999999999 l9 -9 M56 750.1999999999999 l8 -8" stroke="#c39b3e" stroke-width="1.2"/><path d="M59 772.25 L78 777.25 L78 788.25 L64 792.25 Z" fill="none" stroke="#c39b3e" stroke-width="1.5"/><path d="M64 777.25 L74 780.25 V785.25 L66 787.25 Z" fill="none" stroke="#c39b3e" stroke-width="1.2"/><circle cx="59" cy="772.25" r="2" fill="#c39b3e"/><circle cx="78" cy="777.25" r="2" fill="#c39b3e"/><circle cx="64" cy="792.25" r="2" fill="#c39b3e"/><circle cx="77.5" cy="822.3" r="9" fill="none" stroke="#c39b3e" stroke-width="1.6"/><path d="M71.5 826.3 L80.5 815.3 M75.5 829.3 L84.5 818.3" stroke="#c39b3e" stroke-width="1.6"/><circle cx="68.5" cy="822.3" r="1.8" fill="#c39b3e"/><circle cx="86.5" cy="822.3" r="1.8" fill="#c39b3e"/><circle cx="87" cy="862.3499999999999" r="10" fill="none" stroke="#c39b3e" stroke-width="1.6"/><path d="M87 862.3499999999999 L81 856.3499999999999 M81 856.3499999999999 h4 M81 856.3499999999999 v4" fill="none" stroke="#c39b3e" stroke-width="1.4"/><path d="M60 909.4 H79 M60 909.4 L73 895.4" fill="none" stroke="#c39b3e" stroke-width="1.5"/><circle cx="60" cy="909.4" r="2.2" fill="#c39b3e"/><path d="M69 899.4 Q74 903.4 73 908.4" fill="none" stroke="#c39b3e" stroke-width="1.3"/><path d="M70 897.4 l3 3 l1 -4 Z" fill="#c39b3e"/><path d="M59 932.4499999999999 V952.4499999999999 H65 M78 932.4499999999999 V943.4499999999999" fill="none" stroke="#c39b3e" stroke-width="1.5"/><path d="M62 939.4499999999999 l3 -3 l2 2 l4 -4" fill="none" stroke="#c39b3e" stroke-width="1.2"/><path d="M63 944.4499999999999 v-3 M66 944.4499999999999 v-4 M69 944.4499999999999 v-3 M72 944.4499999999999 v-5" stroke="#c39b3e" stroke-width="1.2"/><path d="M66 947.4499999999999 v5 M79 947.4499999999999 v5 M67 949.9499999999999 H78" stroke="#c39b3e" stroke-width="1.1"/><rect x="55.5" y="481" width="118.5" height="37" fill="none" stroke="#e23a3a" stroke-width="2.8"/></svg>
<div class="a" style="left:685px;top:950px;width:539px;height:47px;background:#636363;border:1px solid #7a7a7a"></div>
<div class="a" style="left:733px;top:958px;width:1px;height:31px;background:#7d7d7d"></div>
<div class="a" style="left:1046px;top:958px;width:1px;height:31px;background:#7d7d7d"></div>
<div class="a" style="left:737.5px;top:961px;font-size:18px;line-height:22px;color:#e6e6e6;white-space:nowrap">标注分类</div>
<div class="a" style="left:819px;top:953px;width:225px;height:40.5px;background:#5b5b5b;border:1.5px solid #262626"></div>
<div class="a" style="left:825px;top:963px;width:20.5px;height:21px;background:#e65100;border:1px solid #2a1a10"></div>
<div class="a" style="left:851px;top:961px;font-size:18px;line-height:22px;color:#f0f0f0;white-space:nowrap">未分类</div>
<svg class="a" style="left:685px;top:950px" width="540" height="48" viewBox="685 950 540 48"><path d="M1029 970 H1038 L1033.5 976 Z" fill="#e8e8e8"/><rect x="698" y="964" width="8" height="8" rx="2.5" fill="none" stroke="#e8e8e8" stroke-width="1.6"/><rect x="698" y="976" width="8" height="8" rx="2.5" fill="none" stroke="#e8e8e8" stroke-width="1.6"/><rect x="710" y="976" width="8" height="8" rx="2.5" fill="none" stroke="#e8e8e8" stroke-width="1.6"/><path d="M714 962.5 L719 967.5 L714 972.5 L709 967.5 Z" fill="none" stroke="#e8e8e8" stroke-width="1.6"/><path d="M1069 966 H1062 Q1060 966 1060 968 V984 Q1060 986 1062 986 H1079 Q1081 986 1081 984 V975 M1060 980.5 H1081" fill="none" stroke="#e8e8e8" stroke-width="1.6"/><path d="M1068 978 L1069 973.5 L1079 963.5 L1082.5 967 L1072.5 977 Z" fill="none" stroke="#e8e8e8" stroke-width="1.6"/><path d="M1113.5 962.5 V985.5 M1102 974 H1125 M1110 966 L1113.5 962.5 L1117 966 M1110 982 L1113.5 985.5 L1117 982 M1105.5 970.5 L1102 974 L1105.5 977.5 M1121.5 970.5 L1125 974 L1121.5 977.5" fill="none" stroke="#e8e8e8" stroke-width="1.6"/><circle cx="1113.5" cy="974" r="2.2" fill="#e8e8e8"/><rect x="1146" y="970" width="15" height="15.5" rx="3" fill="none" stroke="#e8e8e8" stroke-width="1.6"/><path d="M1150.5 970 V966.5 Q1150.5 963.5 1153.5 963.5 H1164 Q1167 963.5 1167 966.5 V977 Q1167 980 1164 980 H1161" fill="none" stroke="#e8e8e8" stroke-width="1.6"/><path d="M1194 966 H1191 Q1189.5 966 1189.5 967.5 V984 Q1189.5 985.5 1191 985.5 H1198 M1194.5 963 H1203.5 V968.5 H1194.5 Z M1205 966 H1206 Q1207.5 966 1207.5 967.5 V970" fill="none" stroke="#e8e8e8" stroke-width="1.6"/><rect x="1199" y="973.5" width="12" height="12" rx="1" fill="none" stroke="#e8e8e8" stroke-width="1.6"/></svg>
<div class="a" style="left:0;top:1021px;width:1914px;height:25px;background:#f0f0f0"></div>
<svg class="a" style="left:0;top:1021px" width="260" height="25" viewBox="0 1021 260 25"><path d="M0 1021 H102 L94 1046 H5 Z" fill="#000"/><path d="M102 1021 H204.5 L196 1046 H108 Z" fill="#fff"/><path d="M102.5 1021 L108.5 1046 M204.5 1021 L196 1046" stroke="#333" stroke-width="1.2"/></svg>
<div class="a" style="left:1190px;top:1021px;width:47px;height:25px;background:linear-gradient(to right,rgba(0,0,0,0),rgba(0,0,0,.22))"></div>
<div class="a" style="left:1762px;top:1021px;width:40px;height:25px;background:linear-gradient(to left,rgba(0,0,0,0),rgba(0,0,0,.18))"></div>
<div class="a" style="left:32px;top:1025px;font-size:18px;line-height:22px;color:#fff">模型</div>
<div class="a" style="left:131.5px;top:1025px;font-size:18px;line-height:22px;color:#111">布局1</div>
<div class="a" style="left:1236.5px;top:299.5px;width:526px;height:760px;background:#f0f0f0;border:1px solid #3a3a3a;border-radius:8px;box-shadow:0 0 4px rgba(0,0,0,.4)"></div>
<div class="a" style="left:1237.5px;top:300.5px;width:524px;height:44px;background:#f3f3f3;border-radius:7px 7px 0 0"></div>
<svg class="a" style="left:1248px;top:309px" width="24" height="24"><defs><linearGradient id="ci" x1="0" y1="0" x2="0" y2="1"><stop offset="0" stop-color="#2d8ee6"/><stop offset="1" stop-color="#0c4fa8"/></linearGradient></defs><rect x="0.5" y="0.5" width="23" height="23" rx="2" fill="#7a7a7a"/><rect x="2" y="2" width="20" height="20" fill="url(#ci)"/><text x="12" y="17" text-anchor="middle" font-family="Liberation Sans" font-weight="bold" font-size="10" fill="#e8f0ff" textLength="17" lengthAdjust="spacingAndGlyphs">CAD</text></svg>
<div class="t" style="left:1281px;top:311px;font-size:18px">测量统计</div>
<svg class="a" style="left:1728px;top:312px" width="20" height="20"><path d="M2 2 L17 17 M17 2 L2 17" stroke="#222" stroke-width="1.6"/></svg>
<div class="a" style="left:1253px;top:369px;width:493.5px;height:105px;border:1px solid #d6d6d6"></div>
<div class="a" style="left:1260px;top:358px;width:80px;height:22px;background:#f0f0f0"></div>
<div class="t" style="left:1266px;top:358px">统计范围</div>
<svg class="a" style="left:1266px;top:392px" width="22" height="62"><circle cx="11" cy="11" r="10" fill="#0a5cb5"/><circle cx="11" cy="11" r="4.2" fill="#fff"/><circle cx="11" cy="50" r="9.5" fill="#f3f3f3" stroke="#444" stroke-width="1"/></svg>
<div class="t" style="left:1297px;top:392px">所有标注</div>
<div class="t" style="left:1297px;top:431px">手动选择标注</div>
<div class="btn" style="left:1426px;top:426px;width:93px;height:33px">选择标注</div>
<div class="btn" style="left:1539px;top:426px;width:93px;height:33px">清空选择</div>
<div class="a" style="left:1253px;top:492px;width:20px;height:20px;background:#fbfbfb;border:1px solid #3c3c3c;border-radius:3.5px"></div>
<div class="t" style="left:1282px;top:491px">按标注颜色进行过滤</div>
<div class="btn" style="left:1466px;top:486px;width:146px;height:33px">打开颜色选择框</div>
<div class="a" style="left:1253px;top:538px;width:20px;height:20px;background:#fbfbfb;border:1px solid #3c3c3c;border-radius:3.5px"></div>
<div class="t" style="left:1282px;top:537px">按标注分类进行过滤</div>
<div class="btn" style="left:1466px;top:532px;width:146px;height:33px">打开分类选择框</div>
<div class="a" style="left:1255px;top:576px;width:75.5px;height:28px;background:linear-gradient(#dbe6f5,#b9cfec);border:1px solid #6f96cc;border-bottom:none"></div>
<div class="t" style="left:1273.5px;top:579px;font-weight:bold;color:#111">长度</div>
<div class="a" style="left:1330.5px;top:578px;width:74px;height:26px;background:#f0f0f0;border:1px solid #8a8a8a;border-bottom:none"></div>
<div class="t" style="left:1349px;top:580px">面积</div>
<div class="a" style="left:1253px;top:603.5px;width:492.5px;height:443px;background:#fff;border:2px solid #1e1e1e"></div>
<div class="a" style="left:1314px;top:605.5px;width:1px;height:74px;background:#dadada"></div>
<div class="a" style="left:1374px;top:605.5px;width:1px;height:74px;background:#dadada"></div>
<div class="a" style="left:1474px;top:605.5px;width:1px;height:74px;background:#dadada"></div>
<div class="a" style="left:1573.5px;top:605.5px;width:1px;height:74px;background:#dadada"></div>
<div class="a" style="left:1255px;top:679px;width:319px;height:1px;background:#dadada"></div>
<div class="t" style="left:1266.5px;top:613px;color:#333">序号</div>
<div class="t" style="left:1327.1px;top:613px;color:#333">颜色</div>
<div class="t" style="left:1407.5px;top:613px;color:#333">长度</div>
<div class="t" style="left:1507.5px;top:613px;color:#333">分类</div>
<div class="t" style="left:1279px;top:652px;font-size:19px">1</div>
<div class="a" style="left:1332px;top:649px;width:25px;height:24px;background:#e65100;border:1px solid #3a2010"></div>
<div class="t" style="left:1377.5px;top:652px;font-size:20px">4333</div>
<div class="t" style="left:1497px;top:652px;font-size:18px">未分类</div>
<svg class="a" style="left:0;top:0" width="1914" height="1046" viewBox="0 0 1914 1046"><line x1="593.5" y1="66" x2="170" y2="462" stroke="#e23b3b" stroke-width="3.2" stroke-linecap="round"/><path d="M164.4 452 L155.3 475 L179.7 467.8 Z" fill="#e23b3b"/><line x1="804" y1="77.2" x2="1277" y2="297.5" stroke="#e23b3b" stroke-width="3.2" stroke-linecap="round"/><path d="M1280.4 288.7 L1271 307.6 L1296 307.6 Z" fill="#e23b3b"/><line x1="200.7" y1="500.3" x2="575" y2="567.5" stroke="#e23b3b" stroke-width="3.2" stroke-linecap="round"/><path d="M594.9 572.1 L575.6 559.2 L572.4 579.6 Z" fill="#e23b3b"/></svg>
</body></html>
